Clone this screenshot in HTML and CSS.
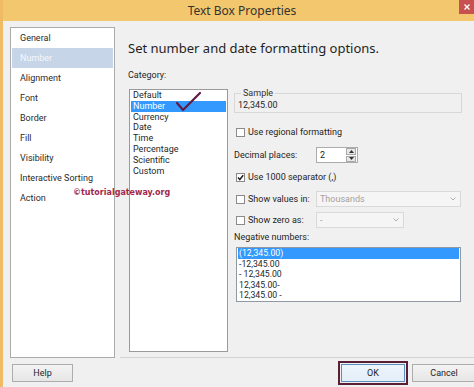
FILE: index.html
```html
<!DOCTYPE html>
<html lang="en">
<head>
	<meta charset="UTF-8">
	<meta name="viewport" content="width=device-width, initial-scale=1.0">
	<title>Text Box Properties</title>
	<link rel="stylesheet" href="styles.css">
</head>
<body>
	<div class="window">
		<div class="titlebar">
			<span></span>
			<h1>Text Box Properties</h1>
			<button class="close" aria-label="Close">
				<svg width="6" height="6" viewBox="0 0 6 6"><path d="M0.5 0.5 L5.5 5.5 M5.5 0.5 L0.5 5.5" stroke="#fff" stroke-width="1.3"/></svg>
			</button>
		</div>

		<div class="main">
			<ul class="nav">
				<li>General</li>
				<li class="selected">Number</li>
				<li>Alignment</li>
				<li>Font</li>
				<li>Border</li>
				<li>Fill</li>
				<li>Visibility</li>
				<li>Interactive Sorting</li>
				<li>Action</li>
			</ul>

			<div class="panel">
				<h2>Set number and date formatting options.</h2>
				<div class="columns">
					<div class="category">
						<label>Category:</label>
						<div class="listbox cat-list">
							<div class="item">Default</div>
							<div class="item selected">Number</div>
							<div class="item">Currency</div>
							<div class="item">Date</div>
							<div class="item">Time</div>
							<div class="item">Percentage</div>
							<div class="item">Scientific</div>
							<div class="item">Custom</div>
							<svg class="tick" width="97" height="30" viewBox="0 0 97 30"><path d="M47 13 L53 20 L70 3" fill="none" stroke="#5e1c45" stroke-width="2.2" stroke-linecap="round" stroke-linejoin="round"/></svg>
						</div>
					</div>

					<div class="options">
						<fieldset class="sample">
							<legend>Sample</legend>
							12,345.00
						</fieldset>

						<div class="row r-regional">
							<span class="check"></span>
							<span>Use regional formatting</span>
						</div>

						<div class="row grid r-decimal">
							<span>Decimal places:</span>
							<div class="spinner">
								<span class="value">2</span>
								<div class="spin">
									<span><svg width="5" height="3" viewBox="0 0 5 3"><path d="M0 3 L2.5 0 L5 3Z" fill="#333"/></svg></span>
									<span><svg width="5" height="3" viewBox="0 0 5 3"><path d="M0 0 L2.5 3 L5 0Z" fill="#333"/></svg></span>
								</div>
							</div>
						</div>

						<div class="row r-sep">
							<span class="check checked">
								<svg width="7" height="7" viewBox="0 0 7 7"><path d="M1 3.6 L2.8 5.5 L6.2 1.2" fill="none" stroke="#222" stroke-width="1.5"/></svg>
							</span>
							<span>Use 1000 separator (,)</span>
						</div>

						<div class="row grid r-values">
							<div class="row">
								<span class="check"></span>
								<span>Show values in:</span>
							</div>
							<div class="select wide">
								<span>Thousands</span>
								<svg width="6" height="4" viewBox="0 0 6 4"><path d="M0.5 0.5 L3 3 L5.5 0.5" fill="none" stroke="#b0b0b0" stroke-width="1"/></svg>
							</div>
						</div>

						<div class="row grid r-zero">
							<div class="row">
								<span class="check"></span>
								<span>Show zero as:</span>
							</div>
							<div class="select narrow">
								<span>-</span>
								<svg width="6" height="4" viewBox="0 0 6 4"><path d="M0.5 0.5 L3 3 L5.5 0.5" fill="none" stroke="#b0b0b0" stroke-width="1"/></svg>
							</div>
						</div>

						<label class="neg-label">Negative numbers:</label>
						<div class="listbox neg-list">
							<div class="item selected">(12,345.00)</div>
							<div class="item">-12,345.00</div>
							<div class="item">- 12,345.00</div>
							<div class="item">12,345.00-</div>
							<div class="item">12,345.00 -</div>
						</div>
					</div>
				</div>
			</div>

			<span class="watermark">©tutorialgateway.org</span>
		</div>

		<div class="footer">
			<button class="btn">Help</button>
			<div class="actions">
				<button class="btn ok">OK</button>
				<button class="btn">Cancel</button>
			</div>
		</div>
	</div>
</body>
</html>
```

FILE: styles.css
```css
* {
	box-sizing: border-box;
	padding: 0;
	margin: 0;
}

body {
	font-family: Roboto, 'Noto Sans', sans-serif;
	font-size: 9px;
	color: #1f1f1f;
	background: #f0f0f0;
	overflow: hidden;
}

.window {
	width: 474px;
	height: 387px;
	border-left: 3px solid #efbb64;
	background: #f0f0f0;
	display: flex;
	flex-direction: column;
	overflow: hidden;
}

.titlebar {
	height: 21px;
	flex: 0 0 21px;
	background: #f3c76d;
	display: grid;
	grid-template-columns: 1fr auto 1fr;
	align-items: start;
}

.titlebar h1 {
	font-family: 'Noto Sans', sans-serif;
	font-size: 12px;
	font-weight: 400;
	line-height: 21px;
	color: #333;
	margin-left: 7px;
}

.close {
	justify-self: end;
	width: 15px;
	height: 14px;
	border: none;
	background: #c75050;
	display: grid;
	place-items: center;
}

.main {
	position: relative;
	display: flex;
	height: 337px;
}

.nav {
	list-style: none;
	width: 105px;
	height: 331px;
	margin: 6px 0 0 7px;
	padding: 0 1px;
	border: 1px solid #ababab;
	background: #fff;
}

.nav li {
	height: 20px;
	line-height: 20px;
	padding-left: 8px;
	color: #2b2b2b;
}

.nav li.selected {
	background: #c6d5e7;
	color: #f5f8fb;
}

.panel {
	flex: 1;
	margin-left: 5px;
	padding: 18px 0 5px 8px;
	border-bottom: 1px solid #d2d2d2;
	display: flex;
	flex-direction: column;
}

.panel h2 {
	font-family: 'Noto Sans', sans-serif;
	font-size: 13px;
	font-weight: 400;
	line-height: 18px;
	color: #1f1f1f;
}

.columns {
	flex: 1;
	display: flex;
	margin-top: 12px;
}

.category {
	width: 100px;
	display: flex;
	flex-direction: column;
}

.category label {
	line-height: 12px;
}

.listbox {
	background: #fff;
	border: 1px solid #9a9a9a;
}

.listbox .item {
	margin: 0 1px;
	white-space: nowrap;
}

.listbox .item.selected {
	background: #3399ff;
	color: #fff;
}

.cat-list {
	position: relative;
	flex: 1;
	margin: 8px 0 0 1px;
}

.cat-list .item {
	line-height: 10.8px;
	padding-left: 2px;
}

.tick {
	position: absolute;
	top: 0;
	left: 0;
}

.options {
	width: 228px;
	margin-left: 6px;
	padding-top: 18px;
	display: flex;
	flex-direction: column;
}

.sample {
	border: 1px solid #d8d8d8;
	padding: 0 2px 1px 3px;
	line-height: 12px;
	min-width: 0;
}

.sample legend {
	margin-left: 3px;
	padding: 0 2px;
	color: #333;
	line-height: 12px;
}

.row {
	display: flex;
	align-items: center;
	gap: 3px;
	white-space: nowrap;
}

.row.grid {
	display: grid;
	grid-template-columns: 82px auto;
	gap: 0;
}

.check {
	width: 9px;
	height: 9px;
	margin-left: 2px;
	border: 1px solid #8a8a8a;
	background: #fff;
	display: grid;
	place-items: center;
}

.r-regional {
	margin-top: 12px;
	height: 14px;
}

.r-decimal {
	margin-top: 8px;
	height: 16px;
}

.spinner {
	width: 42px;
	height: 16px;
	border: 1px solid #acacac;
	background: #fff;
	display: flex;
	align-items: center;
}

.spinner .value {
	padding-left: 3px;
	flex: 1;
}

.spin {
	width: 10px;
	height: 14px;
	display: flex;
	flex-direction: column;
	gap: 1px;
	margin-right: 1px;
}

.spin span {
	flex: 1;
	border: 1px solid #a8a8a8;
	background: #e8e8e8;
	display: grid;
	place-items: center;
}

.r-sep {
	margin-top: 7px;
	height: 14px;
}

.r-values {
	margin-top: 7px;
	height: 16px;
}

.r-zero {
	margin-top: 5px;
	height: 16px;
}

.select {
	height: 16px;
	border: 1px solid #d9d9d9;
	background: #f5f5f5;
	color: #a2a2a2;
	display: flex;
	align-items: center;
	justify-content: space-between;
	padding: 0 4px 0 3px;
}

.select.wide {
	width: 145px;
}

.select.narrow {
	width: 88px;
}

.neg-label {
	margin-top: 3px;
	line-height: 12px;
}

.neg-list {
	margin: 4px 0 0 2px;
	width: 225px;
	height: 55px;
	border-color: #8f98a3;
}

.neg-list .item {
	font-size: 8.7px;
	line-height: 10.5px;
	padding-left: 1px;
}

.watermark {
	position: absolute;
	left: 70px;
	top: 166px;
	font-family: 'DejaVu Sans', sans-serif;
	font-weight: 700;
	font-size: 8px;
	line-height: 12px;
	color: #a0284e;
}

.footer {
	flex: 1;
	display: flex;
	align-items: flex-start;
	padding: 6px 0 0 9px;
}

.btn {
	font-family: inherit;
	font-size: 9px;
	color: #1f1f1f;
	width: 61px;
	height: 18px;
	flex-shrink: 0;
	border: 1px solid #adadad;
	background: linear-gradient(#f3f3f3, #e6e6e6);
}

.actions {
	margin-left: auto;
	margin-right: -2px;
	display: flex;
	gap: 7px;
}

.actions .btn {
	width: 64px;
}

.btn.ok {
	background: linear-gradient(#edf5fc, #e3eef9);
	border-color: #5b8fc0;
	outline: 2px solid #5a1f34;
	outline-offset: 1px;
}
```
